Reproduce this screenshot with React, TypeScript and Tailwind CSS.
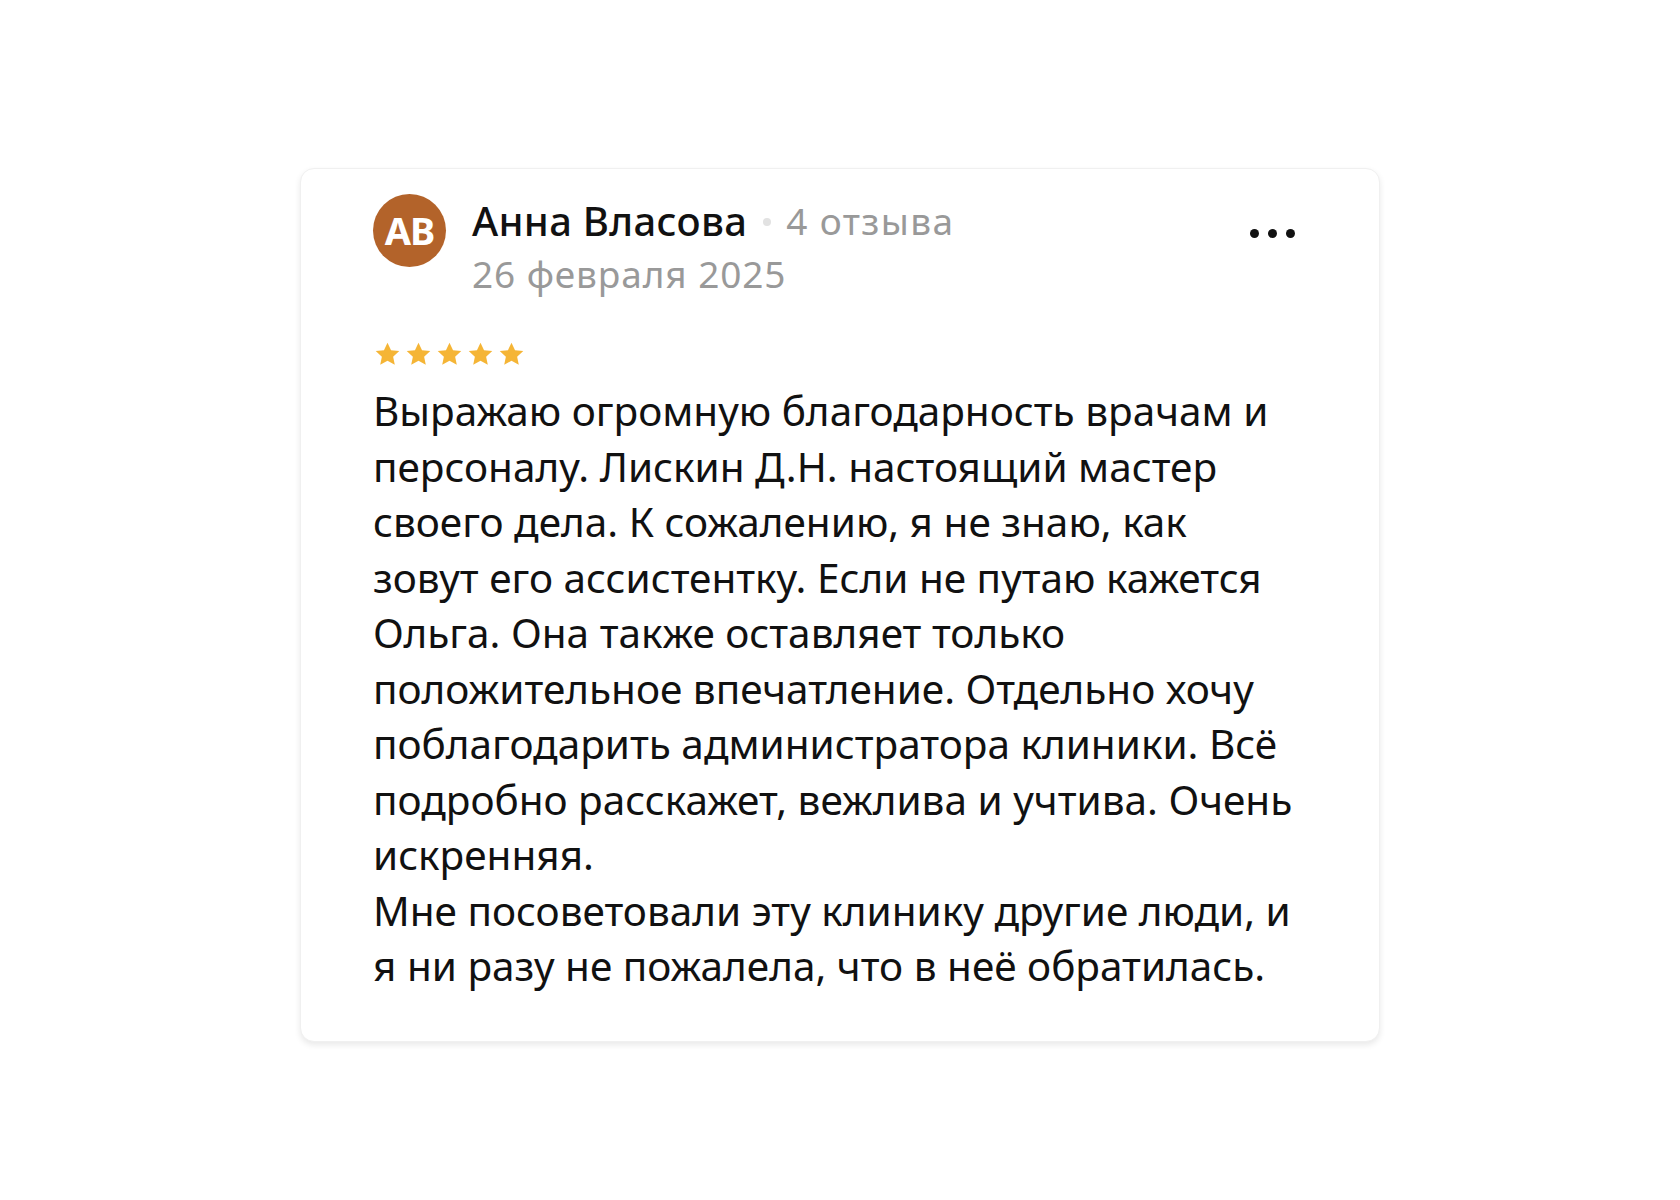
const Star = () => (
  <svg width="25" height="24" viewBox="0 0 24 23" className="shrink-0">
    <path
      d="M12 0.6l3.4 7.2 7.9 0.9-5.9 5.4 1.6 7.8L12 18l-7 3.9 1.6-7.8L0.7 8.7l7.9-0.9z"
      fill="#f5b536"
    />
  </svg>
)

// строки отзыва как в оригинале
const lines = [
  "Выражаю огромную благодарность врачам и",
  "персоналу. Лискин Д.Н. настоящий мастер",
  "своего дела. К сожалению, я не знаю, как",
  "зовут его ассистентку. Если не путаю кажется",
  "Ольга. Она также оставляет только",
  "положительное впечатление. Отдельно хочу",
  "поблагодарить администратора клиники. Всё",
  "подробно расскажет, вежлива и учтива. Очень",
  "искренняя.",
  "Мне посоветовали эту клинику другие люди, и",
  "я ни разу не пожалела, что в неё обратилась.",
]

export default function App() {
  return (
    <div className="min-h-screen w-full bg-white pt-[168px] font-['Noto_Sans',sans-serif]">
      <div className="mx-auto w-[1080px] rounded-[14px] border border-[#f0f0f0] bg-white pl-[72px] pr-[84px] pt-[25px] pb-[47px] shadow-[0_3px_6px_rgba(0,0,0,0.09)]">
        <div className="flex items-start justify-between">
          <div className="flex items-start gap-[26px]">
            <div className="flex h-[73px] w-[73px] shrink-0 items-center justify-center rounded-full bg-[#b3632a] text-[38px] font-bold tracking-[-1px] text-white">
              AB
            </div>
            <div className="pt-[3px]">
              <div className="flex items-center">
                <span className="text-[40px] font-medium leading-[48px] tracking-[0.3px] text-[#111]">Анна Власова</span>
                <span className="ml-[16px] mr-[15px] mt-[2px] h-[8px] w-[8px] rounded-full bg-[#e2e2e2]" />
                <span className="text-[37px] leading-[48px] tracking-[1.4px] text-[#999]">4 отзыва</span>
              </div>
              <div className="mt-[7px] text-[37px] leading-[44px] tracking-[0.9px] text-[#999]">26 февраля 2025</div>
            </div>
          </div>
          <div className="mt-[35px] flex gap-[9px]">
            <span className="h-[9px] w-[9px] rounded-full bg-[#111]" />
            <span className="h-[9px] w-[9px] rounded-full bg-[#111]" />
            <span className="h-[9px] w-[9px] rounded-full bg-[#111]" />
          </div>
        </div>
        <div className="mt-[46px] flex gap-[6px] pl-[2px]">
          <Star />
          <Star />
          <Star />
          <Star />
          <Star />
        </div>
        <p className="mt-[17px] whitespace-nowrap text-[40.5px] leading-[55.5px] text-[#111]">
          {lines.map((line, i) => (
            <span key={i} className="block">
              {line}
            </span>
          ))}
        </p>
      </div>
    </div>
  )
}
